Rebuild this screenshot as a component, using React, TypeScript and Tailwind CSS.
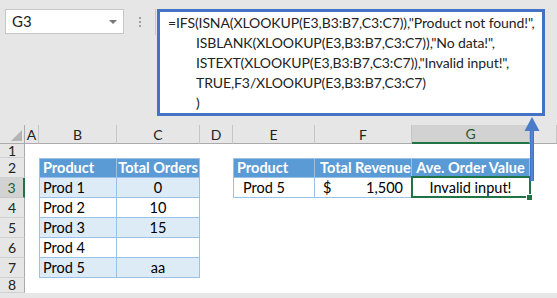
import React from "react";

const COLS = ["A", "B", "C", "D", "E", "F", "G", ""];

const hdr = "bg-[#5b9bd5] text-white font-bold border-r border-b border-t border-[#9bc2e6]";
const odd = "bg-[#ddebf7] border-r border-b border-[#9bc2e6]";
const even = "bg-white border-r border-b border-[#9bc2e6]";

function rowCells(r: number): React.ReactNode[] {
  const cells: React.ReactNode[] = [];
  const blank = (k: string) => <div key={k} className="bg-white" />;
  cells.push(blank("a"));
  if (r >= 2 && r <= 7) {
    const base = r === 2 ? hdr : r % 2 === 1 ? odd : even;
    const bTexts: Record<number, string> = { 2: "Product", 3: "Prod 1", 4: "Prod 2", 5: "Prod 3", 6: "Prod 4", 7: "Prod 5" };
    const cTexts: Record<number, string> = { 2: "Total Orders", 3: "0", 4: "10", 5: "15", 6: "", 7: "aa" };
    cells.push(
      <div key="b" className={`${base} border-l flex items-center pl-[3px] whitespace-nowrap`}>
        {bTexts[r]}
      </div>
    );
    cells.push(
      <div key="c" className={`${base} flex items-center justify-center whitespace-nowrap`}>
        {cTexts[r]}
      </div>
    );
  } else {
    cells.push(blank("b"));
    cells.push(blank("c"));
  }
  cells.push(blank("d"));
  if (r === 2) {
    cells.push(
      <div key="e" className={`${hdr} border-l flex items-center pl-[3px] whitespace-nowrap`}>Product</div>
    );
    cells.push(
      <div key="f" className={`${hdr} flex items-center pl-[5px] whitespace-nowrap`}>Total Revenue</div>
    );
    cells.push(
      <div key="g" className={`${hdr} flex items-center justify-center whitespace-nowrap`}>Ave. Order Value</div>
    );
  } else if (r === 3) {
    cells.push(
      <div key="e" className={`${even} border-l flex items-center pl-[9px] whitespace-nowrap`}>Prod 5</div>
    );
    cells.push(
      <div key="f" className={`${even} flex items-center justify-between pl-[8px] pr-[8px] whitespace-nowrap`}>
        <span>$</span>
        <span>1,500</span>
      </div>
    );
    cells.push(
      <div key="g" className={`${even} relative flex items-center justify-center whitespace-nowrap`}>
        Invalid input!
        <div className="absolute left-[-1px] top-[-2px] right-[-2px] bottom-[-1px] border-2 border-[#217346]" />
        <div className="absolute right-[-4px] bottom-[-4px] w-[5px] h-[5px] bg-[#217346] border border-white box-content" />
      </div>
    );
  } else {
    cells.push(blank("e"));
    cells.push(blank("f"));
    cells.push(blank("g"));
  }
  cells.push(blank("h"));
  return cells;
}

export default function App() {
  const rows = [1, 2, 3, 4, 5, 6, 7, 8];
  return (
    <div className="relative w-[557px] h-[298px] overflow-hidden bg-[#e6e6e6] font-[Lato,'Liberation_Sans',sans-serif] text-[14.5px] text-black">
      {/* Top band */}
      <div className="h-[125px] flex items-start pt-[9px] pl-[5px]">
        <div className="w-[119px] h-[25px] bg-white border border-[#c6c6c6] flex items-center justify-between pl-[6px] pr-[6px] text-[15px] text-[#222]">
          <span>G3</span>
          <span className="w-0 h-0 border-l-[4px] border-r-[4px] border-t-[4px] border-l-transparent border-r-transparent border-t-[#777] mt-[1px]" />
        </div>
        <div className="ml-[15px] mt-[8px] flex flex-col gap-[2px]">
          <span className="w-[2px] h-[2px] bg-[#a0a0a0]" />
          <span className="w-[2px] h-[2px] bg-[#a0a0a0]" />
          <span className="w-[2px] h-[2px] bg-[#a0a0a0]" />
        </div>
        <div className="ml-[14px] w-px h-[26px] bg-[#c6c6c6]" />
        <div className="ml-[1px] w-[388px] h-[107px] bg-white border-[3px] border-[#4472c4] pl-[8px] pt-[1px] text-[14px] tracking-[-0.1px] leading-[20px] text-[#222] whitespace-nowrap">
          <div>=IFS(ISNA(XLOOKUP(E3,B3:B7,C3:C7)),"Product not found!",</div>
          <div className="pl-[28px]">ISBLANK(XLOOKUP(E3,B3:B7,C3:C7)),"No data!",</div>
          <div className="pl-[28px]">ISTEXT(XLOOKUP(E3,B3:B7,C3:C7)),"Invalid input!",</div>
          <div className="pl-[28px]">TRUE,F3/XLOOKUP(E3,B3:B7,C3:C7)</div>
          <div className="pl-[28px]">)</div>
        </div>
      </div>

      {/* Sheet grid */}
      <div className="grid grid-cols-[25px_14px_78px_83px_33px_82px_97px_118px_1fr] grid-rows-[19px_14px_20px_20px_20px_20px_20px_20px]">
        <div className="relative bg-[#e6e6e6] border-r border-b border-[#ababab]">
          <div className="absolute right-[2px] bottom-[2px] w-0 h-0 border-b-[11px] border-l-[11px] border-b-[#b4b4b4] border-l-transparent" />
        </div>
        {COLS.map((c, i) =>
          c === "G" ? (
            <div
              key={i}
              className="bg-[#d2d2d2] border-r border-[#bdbdbd] border-b-2 border-b-[#217346] flex items-center justify-center text-[14px] text-[#1d5c38]"
            >
              {c}
            </div>
          ) : (
            <div
              key={i}
              className="bg-[#e6e6e6] border-r border-[#c6c6c6] border-b border-b-[#ababab] flex items-center justify-center text-[14px] text-[#222]"
            >
              {c}
            </div>
          )
        )}
        {rows.map((r) => (
          <React.Fragment key={r}>
            {r === 3 ? (
              <div className="bg-[#d2d2d2] border-b border-[#c6c6c6] border-r-2 border-r-[#217346] flex items-center justify-center text-[14px] text-[#1d5c38]">
                {r}
              </div>
            ) : (
              <div className="bg-[#e6e6e6] border-b border-[#d0d0d0] border-r border-r-[#ababab] flex items-center justify-center text-[14px] leading-none text-[#222]">
                {r}
              </div>
            )}
            {rowCells(r)}
          </React.Fragment>
        ))}
      </div>

      {/* Arrow from G3 up to formula bar */}
      <svg className="absolute left-[520px] top-[116px]" width="24" height="66" viewBox="0 0 24 66">
        <defs>
          <linearGradient id="ag" x1="0" x2="1" y1="0" y2="0">
            <stop offset="0" stopColor="#3d6cc0" />
            <stop offset="0.5" stopColor="#5b8bd6" />
            <stop offset="1" stopColor="#3d6cc0" />
          </linearGradient>
        </defs>
        <rect x="10" y="13" width="4" height="52" fill="url(#ag)" />
        <polygon points="12,1 4.5,15 19.5,15" fill="#4a7bc9" />
      </svg>
    </div>
  );
}
